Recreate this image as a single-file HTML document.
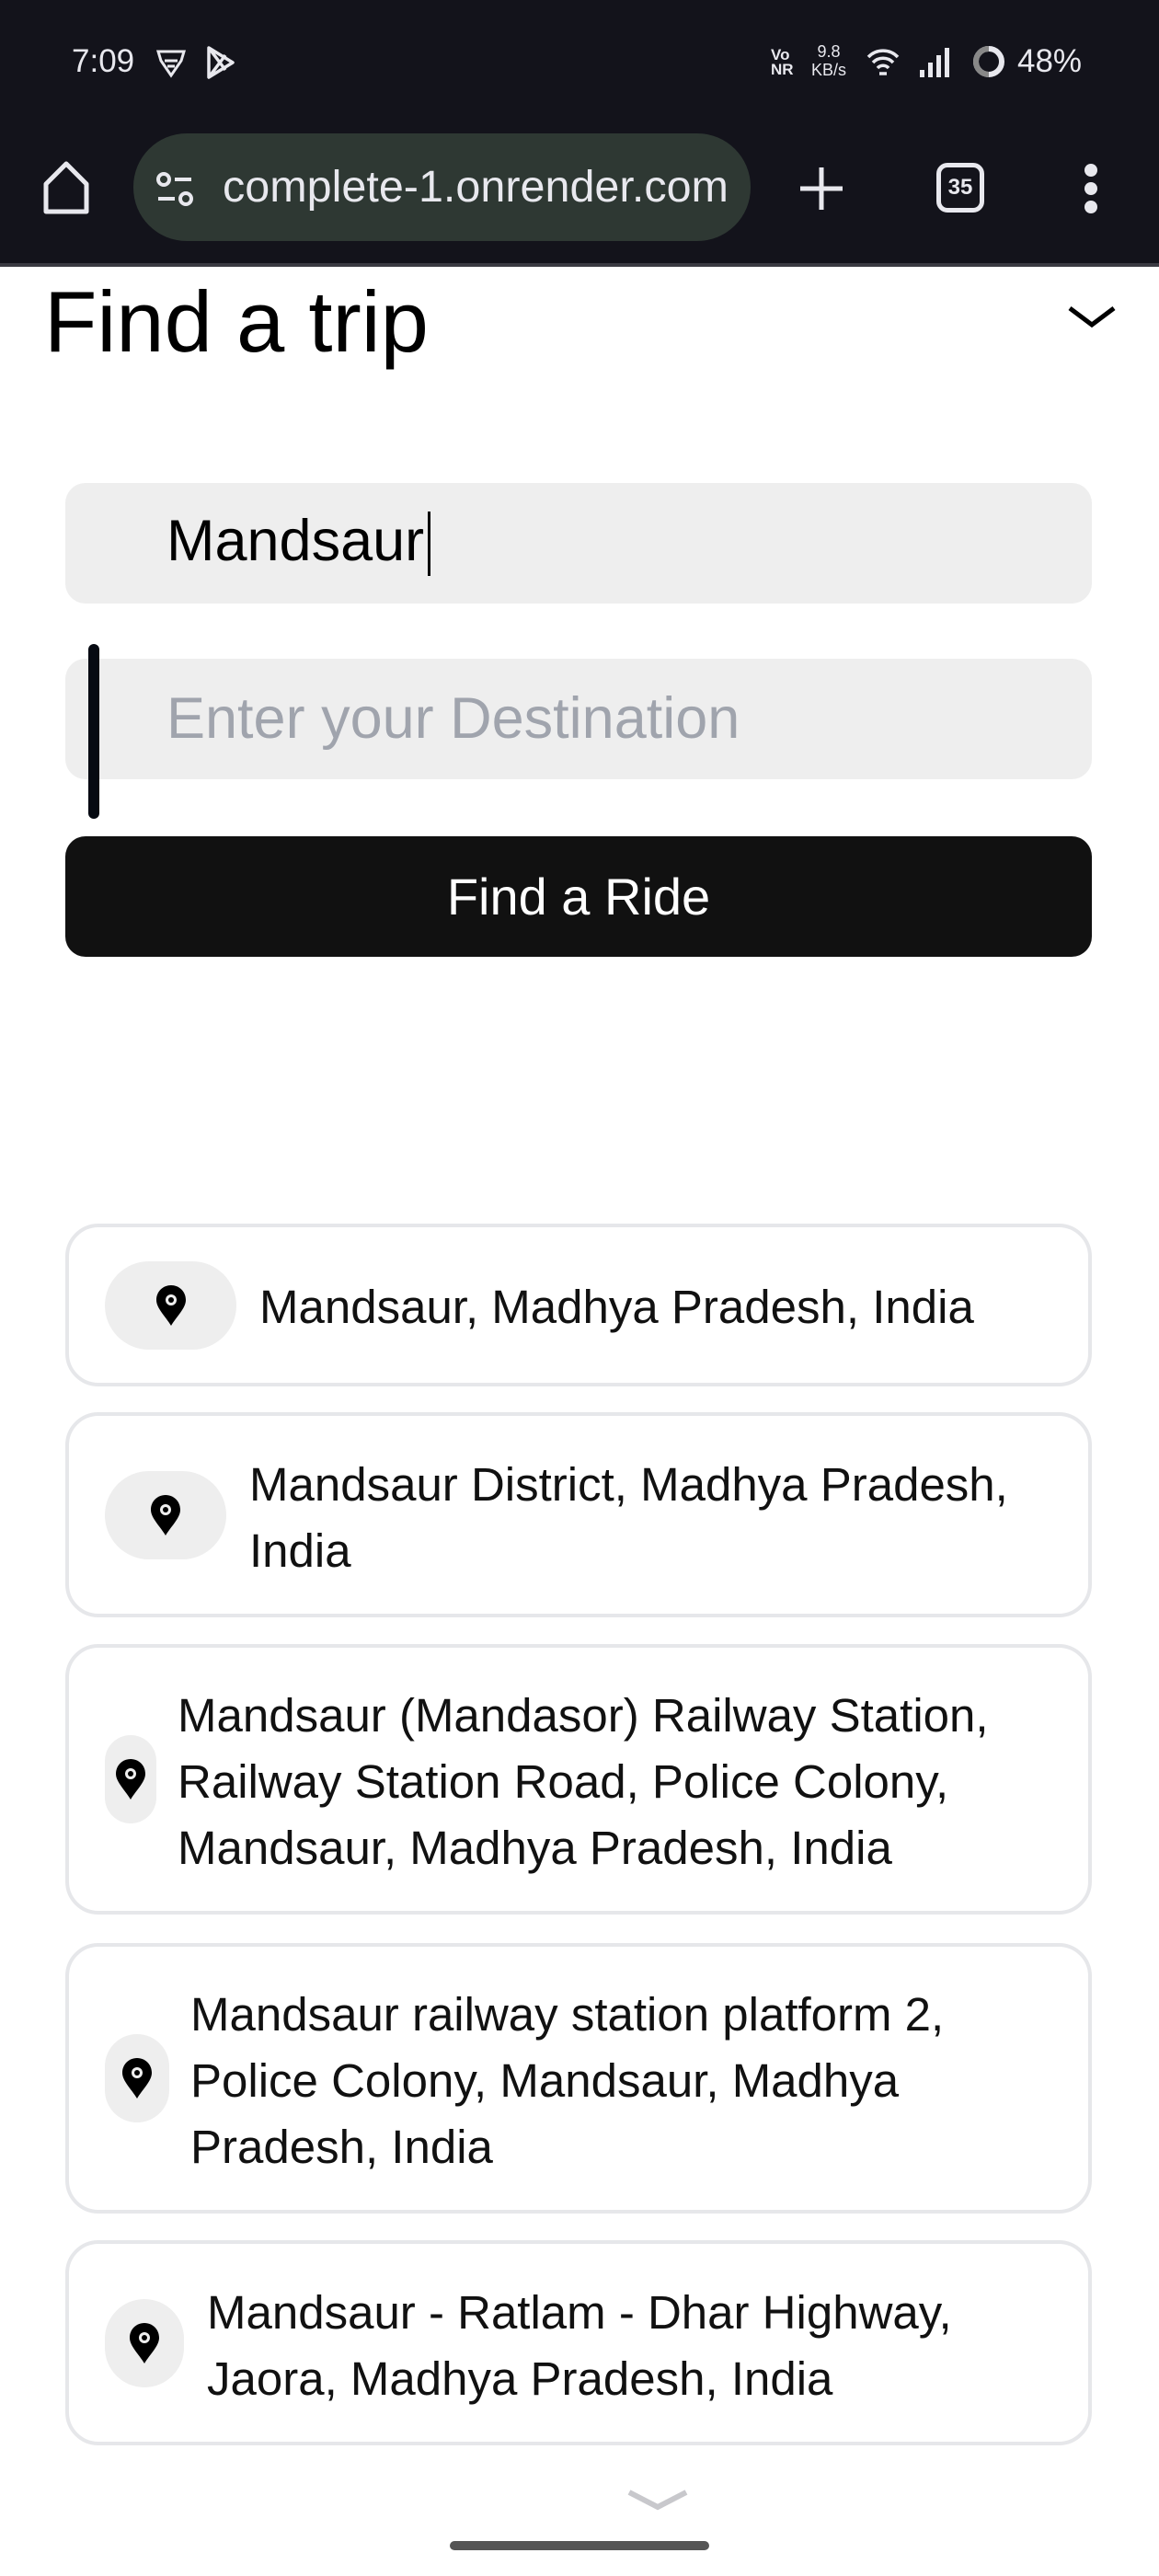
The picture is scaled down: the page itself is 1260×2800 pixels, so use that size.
<!DOCTYPE html>
<html><head><meta charset="utf-8"><style>
*{margin:0;padding:0;box-sizing:border-box}
body{width:1260px;height:2800px;background:#fff;font-family:"Liberation Sans",sans-serif;position:relative;overflow:hidden;color:#000}
.a{position:absolute}
.top{left:0;top:0;width:1260px;height:288px;background:#13131b}
.sb{color:#e8e8ee;font-size:35px}
.item{position:absolute;left:71px;width:1116px;border:4px solid #e6e7ea;border-radius:36px;background:#fff}
.pill{position:absolute;left:39px;background:#eeeeee;border-radius:50px;display:flex;align-items:center;justify-content:center}
.txt{position:absolute;font-size:51px;line-height:72px;white-space:nowrap;color:#111}
</style></head><body>
<div class="a top"></div>
<div class="a" style="left:0;top:286px;width:1260px;height:4px;background:#3a3a42"></div>
<div class="a sb" style="left:78px;top:47px">7:09</div>
<svg class="a" style="left:168px;top:50px" width="36" height="36" viewBox="0 0 36 36" fill="none" stroke="#e8e8ee" stroke-width="3"><path d="M4 6h28l-3 10-11 16L7 16z"/><path d="M11 16h14M14 22h8"/></svg>
<svg class="a" style="left:222px;top:48px" width="36" height="40" viewBox="0 0 36 40" fill="none" stroke="#e8e8ee" stroke-width="3.5" stroke-linejoin="round"><path d="M5 4l26 16L5 36z M5 4l18 24 M5 36l18-24"/></svg>
<div class="a" style="left:838px;top:52px;color:#e8e8ee;font-size:17px;line-height:16px;font-weight:bold">Vo<br>NR</div>
<div class="a" style="left:882px;top:46px;color:#e8e8ee;font-size:18px;line-height:20px;text-align:center">9.8<br>KB/s</div>
<svg class="a" style="left:940px;top:48px" width="40" height="38" viewBox="0 0 40 38" fill="none" stroke="#e8e8ee" stroke-width="3.5"><path d="M4 14a22 22 0 0 1 32 0M9 20a15 15 0 0 1 22 0M14 26a8 8 0 0 1 12 0"/><path d="M16 32h8" /></svg>
<svg class="a" style="left:998px;top:50px" width="40" height="34" viewBox="0 0 40 34" fill="#e8e8ee"><rect x="2" y="26" width="5" height="8"/><rect x="11" y="18" width="5" height="16"/><rect x="20" y="10" width="5" height="24"/><rect x="29" y="2" width="5" height="32"/></svg>
<svg class="a" style="left:1056px;top:48px" width="38" height="38" viewBox="0 0 38 38" fill="none" stroke-width="6"><circle cx="19" cy="19" r="14" stroke="#e8e8ee"/><path d="M19 5a14 14 0 0 0 0 28" stroke="#888"/></svg>
<div class="a sb" style="left:1106px;top:47px">48%</div>
<svg class="a" style="left:44px;top:172px" width="56" height="64" viewBox="0 0 56 64" fill="none" stroke="#e8e8ee" stroke-width="5" stroke-linejoin="round"><path d="M6 28L28 6l22 22v30H6z"/></svg>
<div class="a" style="left:145px;top:145px;width:671px;height:117px;border-radius:58px;background:#2e3833"></div>
<svg class="a" style="left:168px;top:186px" width="44" height="40" viewBox="0 0 44 40" fill="none" stroke="#e8e8ee" stroke-width="4"><circle cx="10" cy="9" r="6"/><path d="M22 9h18M4 30h18"/><circle cx="34" cy="30" r="6"/></svg>
<div class="a" style="left:242px;top:175px;font-size:48.5px;color:#e8e8ee">complete-1.onrender.com</div>
<svg class="a" style="left:866px;top:178px" width="54" height="54" viewBox="0 0 54 54" stroke="#e8e8ee" stroke-width="5"><path d="M27 4v46M4 27h46"/></svg>
<div class="a" style="left:1018px;top:177px;width:52px;height:54px;border:5px solid #e8e8ee;border-radius:12px;color:#e8e8ee;font-size:24px;font-weight:bold;text-align:center;line-height:44px">35</div>
<div class="a" style="left:1179px;top:178px;width:14px;height:14px;border-radius:7px;background:#e8e8ee"></div>
<div class="a" style="left:1179px;top:198px;width:14px;height:14px;border-radius:7px;background:#e8e8ee"></div>
<div class="a" style="left:1179px;top:218px;width:14px;height:14px;border-radius:7px;background:#e8e8ee"></div>

<div class="a" style="left:48px;top:296px;font-size:94px">Find a trip</div>
<svg class="a" style="left:1160px;top:330px" width="54" height="28" viewBox="0 0 54 28" fill="none" stroke="#000" stroke-width="5"><path d="M3 5l24 18L51 5"/></svg>

<div class="a" style="left:71px;top:525px;width:1116px;height:131px;background:#eeeeee;border-radius:22px"></div>
<div class="a" style="left:181px;top:552px;font-size:63px">Mandsaur</div>
<div class="a" style="left:465px;top:556px;width:3px;height:70px;background:#000"></div>
<div class="a" style="left:71px;top:716px;width:1116px;height:131px;background:#eeeeee;border-radius:22px"></div>
<div class="a" style="left:181px;top:745px;font-size:63px;color:#a0a4ad">Enter your Destination</div>
<div class="a" style="left:96px;top:700px;width:12px;height:190px;background:#060a12;border-radius:6px"></div>
<div class="a" style="left:71px;top:909px;width:1116px;height:131px;background:#111;border-radius:22px;color:#fff;font-size:56px;text-align:center;line-height:131px">Find a Ride</div>

<div class="item" style="top:1330px;height:177px">
 <div class="pill" style="top:37px;width:143px;height:96px"><svg width="36" height="48" viewBox="0 0 36 48"><path d="M18 2C9 2 2 9 2 18c0 9 10 18 16 28 6-10 16-19 16-28C34 9 27 2 18 2z" fill="#000"/><circle cx="18" cy="18" r="6" fill="#eee"/><circle cx="18" cy="18" r="3" fill="#000"/></svg></div>
 <div class="txt" style="left:207px;top:51px">Mandsaur, Madhya Pradesh, India</div>
</div>
<div class="item" style="top:1535px;height:223px">
 <div class="pill" style="top:60px;width:132px;height:96px"><svg width="36" height="48" viewBox="0 0 36 48"><path d="M18 2C9 2 2 9 2 18c0 9 10 18 16 28 6-10 16-19 16-28C34 9 27 2 18 2z" fill="#000"/><circle cx="18" cy="18" r="6" fill="#eee"/><circle cx="18" cy="18" r="3" fill="#000"/></svg></div>
 <div class="txt" style="left:196px;top:39px">Mandsaur District, Madhya Pradesh,<br>India</div>
</div>
<div class="item" style="top:1787px;height:294px">
 <div class="pill" style="top:95px;width:56px;height:96px"><svg width="36" height="48" viewBox="0 0 36 48"><path d="M18 2C9 2 2 9 2 18c0 9 10 18 16 28 6-10 16-19 16-28C34 9 27 2 18 2z" fill="#000"/><circle cx="18" cy="18" r="6" fill="#eee"/><circle cx="18" cy="18" r="3" fill="#000"/></svg></div>
 <div class="txt" style="left:118px;top:38px">Mandsaur (Mandasor) Railway Station,<br>Railway Station Road, Police Colony,<br>Mandsaur, Madhya Pradesh, India</div>
</div>
<div class="item" style="top:2112px;height:294px">
 <div class="pill" style="top:95px;width:70px;height:96px"><svg width="36" height="48" viewBox="0 0 36 48"><path d="M18 2C9 2 2 9 2 18c0 9 10 18 16 28 6-10 16-19 16-28C34 9 27 2 18 2z" fill="#000"/><circle cx="18" cy="18" r="6" fill="#eee"/><circle cx="18" cy="18" r="3" fill="#000"/></svg></div>
 <div class="txt" style="left:132px;top:38px">Mandsaur railway station platform 2,<br>Police Colony, Mandsaur, Madhya<br>Pradesh, India</div>
</div>
<div class="item" style="top:2435px;height:223px">
 <div class="pill" style="top:60px;width:86px;height:96px"><svg width="36" height="48" viewBox="0 0 36 48"><path d="M18 2C9 2 2 9 2 18c0 9 10 18 16 28 6-10 16-19 16-28C34 9 27 2 18 2z" fill="#000"/><circle cx="18" cy="18" r="6" fill="#eee"/><circle cx="18" cy="18" r="3" fill="#000"/></svg></div>
 <div class="txt" style="left:150px;top:39px">Mandsaur - Ratlam - Dhar Highway,<br>Jaora, Madhya Pradesh, India</div>
</div>

<svg class="a" style="left:680px;top:2704px" width="70" height="26" viewBox="0 0 70 26" fill="none" stroke="#c8c8cc" stroke-width="6"><path d="M4 5l31 16L66 5"/></svg>
<div class="a" style="left:489px;top:2762px;width:282px;height:10px;border-radius:5px;background:#555"></div>
</body></html>
